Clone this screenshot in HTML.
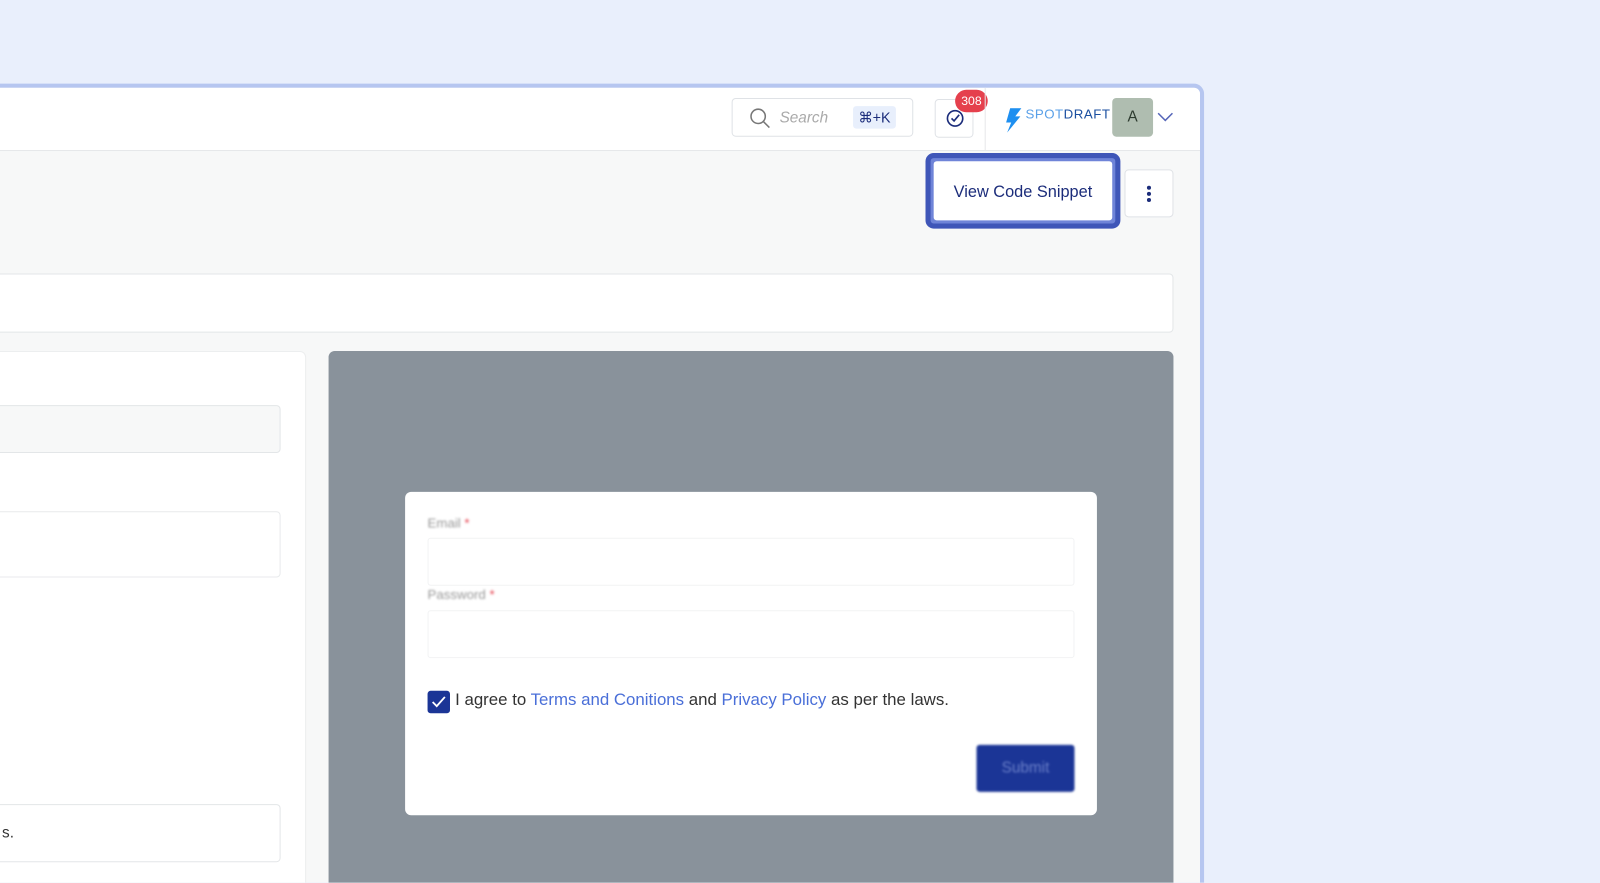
<!DOCTYPE html>
<html><head><meta charset="utf-8"><style>
*{box-sizing:border-box;margin:0;padding:0}
html{overflow:hidden;height:883px}
body{width:1600px;height:883px;background:#e9effc;position:relative;overflow:hidden;font-family:"Liberation Sans",sans-serif}
.wrap{position:absolute;left:0;top:0;width:1568px;height:865px;overflow:hidden;transform:scale(1.0204);transform-origin:0 0}
.win{position:absolute;left:-20px;top:82px;width:1200px;height:840px;border:4px solid #b6c6f0;border-radius:10px;background:#f7f8f8;overflow:hidden}
.hdr{position:absolute;left:0;top:0;right:0;height:62px;background:#fff;border-bottom:1px solid #e6e8ea}
.abs{position:absolute}
</style></head><body>
<div class="wrap">
<div class="win">
 <div class="hdr">
  <div class="abs" style="left:733px;top:10px;width:178px;height:38px;border:1px solid #dfe2e6;border-radius:4px">
   <svg class="abs" style="left:16px;top:8px" width="22" height="22" viewBox="0 0 22 22"><circle cx="9" cy="9" r="7" fill="none" stroke="#777" stroke-width="1.5"/><line x1="14" y1="14" x2="20" y2="20" stroke="#777" stroke-width="1.5"/></svg>
   <span class="abs" style="left:46px;top:10px;font-size:15px;font-style:italic;color:#aaa">Search</span>
   <span class="abs" style="left:118px;top:7px;width:42px;height:22px;background:#e8effc;border-radius:3px;color:#1b2c7a;font-size:14px;text-align:center;line-height:22px">⌘+K</span>
  </div>
  <div class="abs" style="left:932px;top:11px;width:38px;height:38px;border:1px solid #dfe2e6;border-radius:4px">
   <svg class="abs" style="left:9px;top:8px" width="20" height="20" viewBox="0 0 20 20"><circle cx="10" cy="10" r="7.5" fill="none" stroke="#1b2c7a" stroke-width="1.6"/><path d="M6.5 10l2.5 2.5 5-6" fill="none" stroke="#1b2c7a" stroke-width="1.6"/></svg>
  </div>
  <div class="abs" style="left:952px;top:2px;width:32px;height:22px;background:#e5404d;border-radius:11px;color:#fff;font-size:12px;text-align:center;line-height:22px">308</div>
  <div class="abs" style="left:981px;top:0;width:1px;height:62px;background:#e6e8ea"></div>
  <svg class="abs" style="left:1000px;top:20px" width="18" height="24" viewBox="0 0 18 24"><path d="M6 0h11l-6 8h5L3 24l4-10H2z" fill="#1e8ff0"/></svg>
  <span class="abs" style="left:1021px;top:18px;font-size:13px;letter-spacing:.5px;color:#5aa0e8">SPOT<span style="color:#1b4fa0">DRAFT</span></span>
  <div class="abs" style="left:1106px;top:10px;width:40px;height:38px;background:#afbdb0;border-radius:4px;color:#2d3b2f;font-size:15px;text-align:center;line-height:38px">A</div>
  <svg class="abs" style="left:1150px;top:24px" width="16" height="10" viewBox="0 0 16 10"><path d="M1 1l7 7 7-7" fill="none" stroke="#5565b8" stroke-width="1.5"/></svg>
 </div>
 <div class="abs" style="left:923px;top:64px;width:191px;height:74px;border:5px solid #3f56b8;border-radius:8px;background:#6f84d8;padding:3px">
  <div style="width:100%;height:100%;background:#fff;border-radius:3px;color:#1b2c7a;font-size:16px;text-align:center;line-height:62px">View Code Snippet</div>
 </div>
 <div class="abs" style="left:1118px;top:80px;width:48px;height:47px;background:#fff;border:1px solid #dfe2e6;border-radius:4px">
  <svg class="abs" style="left:20px;top:13px" width="6" height="20"><circle cx="3" cy="4" r="2" fill="#1b2c7a"/><circle cx="3" cy="10" r="2" fill="#1b2c7a"/><circle cx="3" cy="16" r="2" fill="#1b2c7a"/></svg>
 </div>
 <div class="abs" style="left:0;top:182px;width:1166px;height:58px;background:#fff;border:1px solid #e3e6e8;border-radius:4px"></div>
 <div class="abs" style="left:0;top:258px;width:316px;height:620px;background:#fff;border:1px solid #eceeef;border-radius:6px">
  <div class="abs" style="left:0;top:52px;width:290px;height:47px;background:#f7f8f8;border:1px solid #e3e6e8;border-radius:4px"></div>
  <div class="abs" style="left:0;top:156px;width:290px;height:65px;border:1px solid #e8eaec;border-radius:4px"></div>
  <div class="abs" style="left:0;top:443px;width:290px;height:57px;border:1px solid #e3e6e8;border-radius:4px;font-size:15px;line-height:55px;padding-left:16px;color:#333">s.</div>
 </div>
 <div class="abs" style="left:338px;top:258px;width:828px;height:620px;background:#89929b;border-radius:6px">
  <div class="abs" style="left:75px;top:138px;width:678px;height:317px;background:#fff;border-radius:6px">
   <div class="abs" style="left:22px;top:23px;font-size:13px;color:#999;filter:blur(1px)">Email <span style="color:#e5404d">*</span></div>
   <div class="abs" style="left:22px;top:45px;width:634px;height:47px;border:1px solid #f2f3f4;border-radius:3px"></div>
   <div class="abs" style="left:22px;top:93px;font-size:13px;color:#999;filter:blur(1px)">Password <span style="color:#e5404d">*</span></div>
   <div class="abs" style="left:22px;top:116px;width:634px;height:47px;border:1px solid #f2f3f4;border-radius:3px"></div>
   <div class="abs" style="left:22px;top:195px;width:22px;height:22px;background:#1b3596;border-radius:3px">
    <svg width="22" height="22"><path d="M5 11l4 4 8-9" fill="none" stroke="#fff" stroke-width="1.8"/></svg>
   </div>
   <div class="abs" style="left:49px;top:195px;font-size:16.5px;color:#333">I agree to <span style="color:#4a6fd8">Terms and Conitions</span> and <span style="color:#4a6fd8">Privacy Policy</span> as per the laws.</div>
   <div class="abs" style="left:560px;top:248px;width:96px;height:46px;background:#1b3596;border-radius:3px;filter:blur(1px);color:#6a7fc8;font-size:15px;text-align:center;line-height:46px">Submit</div>
  </div>
 </div>
</div>
</div>
</body></html>
